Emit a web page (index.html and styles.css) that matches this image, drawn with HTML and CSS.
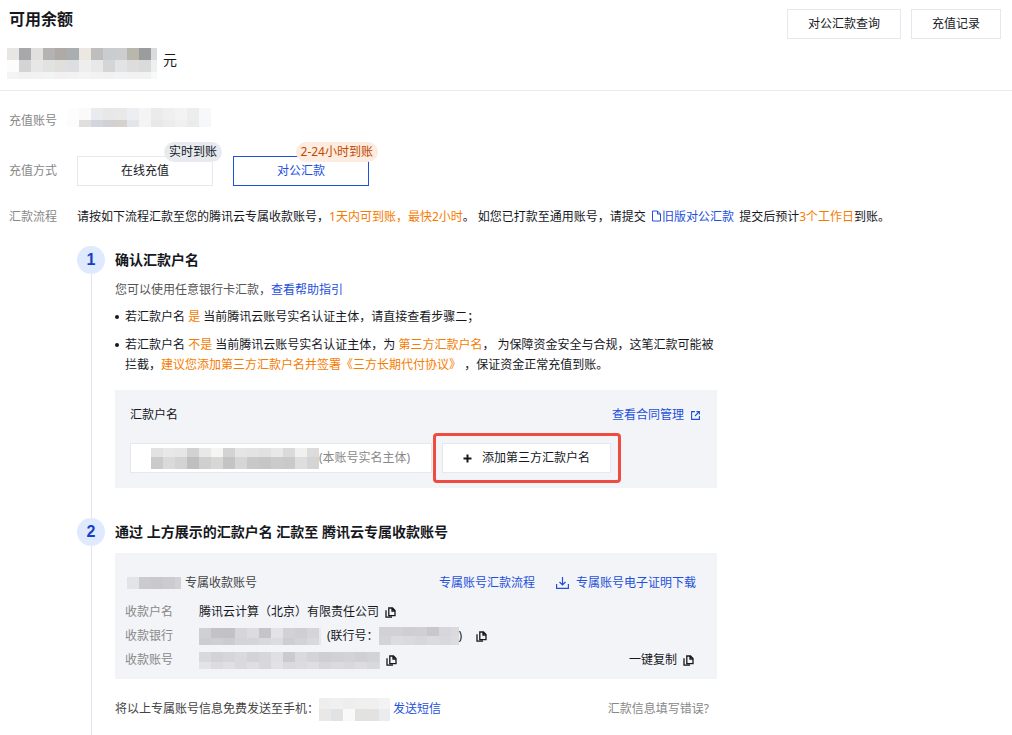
FILE: index.html
```html
<!DOCTYPE html>
<html lang="zh-CN">

<head>
  <meta charset="UTF-8">
  <meta name="viewport" content="width=device-width, initial-scale=1.0">
  <title>可用余额</title>
  <link rel="stylesheet" href="styles.css">
</head>

<body>
  <!-- 复制图标 -->
  <svg class="sprite" aria-hidden="true">
    <symbol id="icon-copy" viewBox="0 0 11 11">
      <path d="M3.8 1h3.7L10 3.5V8.6H3.8zM7 1v3h3M1 3.2V10.2h6" fill="none" stroke="currentColor" stroke-width="1.3"/>
    </symbol>
  </svg>

  <!-- 余额 -->
  <header class="header">
    <div>
      <h1 class="header-title">可用余额</h1>
      <div class="balance">
        <svg class="mosaic" width="150" height="31" data-heights="12 12 7" data-colors="e8e6e4 a8a8aa e1e0df b3b3b3 afaaa6 a9aeb0 ece7e0 bebebe c9cdd0 cccdcf b9b6ac 9b9c9e d9dbdf|fdfcfa d3d4d6 e7e7e7 e1e3e1 e1dfdd dddee1 eeeeee e8e8e8 d4d5d7 e2e3e5 dedddb d9dbdb eeeff1|f4f4f4 f1f1f1 f2f2f2 f3f3f3 f1f1f1 f2f2f2 f4f4f4 f2f2f2 f1f1f1 f3f3f3 f2f2f2 f2f2f2 f9f9f9"></svg>
        <span>元</span>
      </div>
    </div>
    <div class="header-actions">
      <button type="button" class="btn">对公汇款查询</button>
      <button type="button" class="btn">充值记录</button>
    </div>
  </header>

  <main class="form">
    <div class="form-row">
      <div class="form-label">充值账号</div>
      <div class="form-content account">
        <svg class="mosaic" width="144" height="19" data-heights="12 7" data-colors="fdfdfd fbfafa e9ebee e8e8e8 e9e9e8 eceef1 f4f4f4 ebebeb efefef f3f3f3 ededed f6f8fa|fcfcfc e1dfdd d2d5dd d1d1d3 d6d1cc e2e6e9 f4f4f4 e8e8e8 ececec f0f0f0 ebebeb f5f7fa"></svg>
      </div>
    </div>

    <div class="form-row">
      <div class="form-label">充值方式</div>
      <div class="form-content tabs">
        <button type="button" class="tab">在线充值<span class="tab-badge">实时到账</span></button>
        <button type="button" class="tab active">对公汇款<span class="tab-badge">2-24小时到账</span></button>
      </div>
    </div>

    <div class="form-row form-row-text">
      <div class="form-label">汇款流程</div>
      <div class="form-content">
        <p class="tip">请按如下流程汇款至您的腾讯云专属收款账号，<span class="warn">1天内可到账，最快2小时</span>。 如您已打款至通用账号，请提交 <a href="#" class="link doc-link"><svg class="icon-doc" width="11" height="12" viewBox="0 0 11 12"><path d="M1.5 1h5L9.500 4v7h-8zM6.500 1v3h3" fill="none" stroke="currentColor"/></svg>旧版对公汇款</a> 提交后预计<span class="warn">3个工作日</span>到账。</p>

        <!-- 步骤 -->
        <ol class="steps">
          <li class="step">
            <span class="step-num">1</span>
            <div class="step-body">
              <h2 class="step-title">确认汇款户名</h2>
              <p class="step-desc">您可以使用任意银行卡汇款，<a href="#" class="link">查看帮助指引</a></p>
              <ul class="notes">
                <li>若汇款户名 <span class="warn">是</span> 当前腾讯云账号实名认证主体，请直接查看步骤二；</li>
                <li>若汇款户名 <span class="warn">不是</span> 当前腾讯云账号实名认证主体，为 <span class="warn">第三方汇款户名</span>， 为保障资金安全与合规，这笔汇款可能被拦截，<span class="warn">建议您添加第三方汇款户名并签署《三方长期代付协议》</span> ，保证资金正常充值到账。</li>
              </ul>

              <section class="panel payer">
                <div class="panel-head">
                  <span>汇款户名</span>
                  <a href="#" class="link contract-link">查看合同管理
                    <svg width="9" height="9" viewBox="0 0 9 9"><path d="M4 .6H.6v7.800h7.800V5M5.500.6h2.900v2.900M8.300.7L4 5" fill="none" stroke="currentColor" stroke-width="1.100"/></svg>
                  </a>
                </div>
                <div class="payer-list">
                  <div class="payer-item">
                    <svg class="mosaic" width="168" height="21" data-heights="9 12" data-colors="e2e2e2 e8e8e8 e6e6e6 d2d2d2 e8e8e8 f5f5f3 d3d3d3 e5e5e5 e3e3e3 e1e1e1 e8e8e8 d9dbda f0f0f0 dcdcdc|cacaca dadada d3d3d3 bfbfbf d1cfcd d7d7d7 c4c4c4 d6d6d6 c8c8c8 c6c6c6 cbcbcb c9c9c9 dedede d4d4d4"></svg>
                    <span>(本账号实名主体)</span>
                  </div>
                  <div class="highlight">
                    <button type="button" class="btn btn-add">
                      <svg width="9" height="9" viewBox="0 0 9 9"><path d="M4.500 .5v8M.5 4.500h8" stroke="currentColor" stroke-width="2"/></svg>
                      添加第三方汇款户名
                    </button>
                  </div>
                </div>
              </section>
            </div>
          </li>

          <li class="step">
            <span class="step-num">2</span>
            <div class="step-body">
              <h2 class="step-title">通过 上方展示的汇款户名 汇款至 腾讯云专属收款账号</h2>

              <section class="panel payee">
                <div class="payee-head">
                  <svg class="mosaic" width="54" height="12" data-heights="12" data-colors="e3e4e8 cbcbce c9c9cd cccccf d2d2d5"></svg>
                  <span>专属收款账号</span>
                  <div class="payee-links">
                    <a href="#" class="link">专属账号汇款流程</a>
                    <a href="#" class="link download-link">
                      <svg width="13" height="12" viewBox="0 0 13 12"><path d="M6.500 0v8M3.500 5l3 3 3-3M.6 7v4.400h11.800V7" fill="none" stroke="currentColor" stroke-width="1.200"/></svg>
                      专属账号电子证明下载
                    </a>
                  </div>
                </div>
                <dl class="payee-info">
                  <div class="info-row">
                    <dt>收款户名</dt>
                    <dd>腾讯云计算（北京）有限责任公司
                      <button type="button" class="copy" aria-label="复制"><svg width="11" height="11"><use href="#icon-copy"/></svg></button>
                    </dd>
                  </div>
                  <div class="info-row">
                    <dt>收款银行</dt>
                    <dd>
                      <svg class="mosaic" width="122" height="17" data-heights="10 7" data-colors="d0d0d4 c3c3c7 c2c2c6 d6d6da dcdce0 c5c5c9 e3e3e7 d2d2d6 cfcfd3 d5d5d9 e9e9ed|cdcdd1 cfcfd3 ccccd0 d4d4d8 d5d5d9 d9d9dd dcdce0 cececf d3d3d7 d9d9dd e6e6ea"></svg>
                      <span class="bank-code">(联行号：<svg class="mosaic" width="80" height="18" data-heights="9 9" data-colors="d2d2d6 d2d2d5 cfcfd3 d0d0d4 c8c8cc d7d7db dadade|d4d4d7 dcdcdf dadade d7d7db dbdbdf d9d9dd dcdce0"></svg>)</span>
                      <button type="button" class="copy copy-far" aria-label="复制"><svg width="11" height="11"><use href="#icon-copy"/></svg></button>
                    </dd>
                  </div>
                  <div class="info-row">
                    <dt>收款账号</dt>
                    <dd>
                      <svg class="mosaic" width="181" height="17" data-heights="10 7" data-colors="d9d9dd d3d3d7 d6d6da dadade d3d3d7 d7d7db e0e0e4 cbcbcf dadade d4d4d8 cfcfd3 d1d1d5 d3d3d7 d0d0d4 d3d3d7 d8d8dc|e4e4e8 dcdce0 e0e0e4 dadade dfdfe3 d8d8dc e2e2e6 dadade dcdce0 dfdfe3 d7d7db dbdbdf d9d9dd dddde1 d9d9dd dddde1"></svg>
                      <button type="button" class="copy" aria-label="复制"><svg width="11" height="11"><use href="#icon-copy"/></svg></button>
                      <button type="button" class="copy copy-all">一键复制 <svg width="11" height="11"><use href="#icon-copy"/></svg></button>
                    </dd>
                  </div>
                </dl>
              </section>

              <div class="sms">
                <span>将以上专属账号信息免费发送至手机：</span>
                <svg class="mosaic" width="71" height="23" data-heights="11 12" data-colors="eeeeee f0f0f0 eeeeee efefef f0f0f0 f3f3f3|e9e8e6 e1e2e4 f9f9f9 e2e2e0 e3e2e0 ebeced"></svg>
                <a href="#" class="link sms-send">发送短信</a>
                <a href="#" class="sms-help">汇款信息填写错误?</a>
              </div>
            </div>
          </li>
        </ol>
      </div>
    </div>
  </main>

  <script src="mosaic.js"></script>
</body>

</html>
```

FILE: styles.css
```css
/* 整体样式 */
* {
  box-sizing: border-box;
}

body {
  margin: 0;
  background-color: #fff;
  color: #16181d;
  font-family: "Noto Sans", "Noto Sans CJK SC", sans-serif;
  font-size: 12px;
  line-height: 20px;
}

h1,
h2,
p,
ul,
ol,
dl,
dd {
  margin: 0;
  padding: 0;
}

ol,
ul {
  list-style: none;
}

button {
  font: inherit;
  color: inherit;
  cursor: pointer;
}

svg {
  flex: none;
}

.sprite {
  position: absolute;
  width: 0;
  height: 0;
}

.link {
  color: #1e50dc;
  text-decoration: none;
}

.link:hover {
  text-decoration: underline;
}

.warn {
  color: #f57c00;
}

.btn {
  height: 30px;
  padding: 0 20px;
  border: 1px solid #e6e8f0;
  background-color: #fff;
  line-height: 28px;
}

/* 头部 */
.header {
  display: flex;
  justify-content: space-between;
  padding: 9px 11px 11px 7px;
  border-bottom: 1px solid #ebebeb;
}

.header-title {
  padding-left: 2px;
  font-size: 16px;
  line-height: 20px;
}

.header-actions {
  display: flex;
  align-items: flex-start;
  gap: 10px;
}

.balance {
  display: flex;
  gap: 6px;
  margin-top: 19px;
  font-size: 14px;
  line-height: 24px;
}

/* 表单 */
.form {
  display: flex;
  flex-direction: column;
  gap: 20px;
  padding: 15px 11px 0 9px;
}

.form-row {
  display: flex;
  align-items: center;
  min-height: 30px;
}

.form-row-text {
  align-items: flex-start;
  padding-top: 1px;
}

.form-label {
  flex: none;
  width: 68px;
  color: #888;
}

.form-content {
  flex: 1;
  min-width: 0;
}

.account {
  display: flex;
  margin: 0 0 8px -10px;
}

/* 充值方式 */
.tabs {
  display: flex;
  gap: 20px;
}

.tab {
  position: relative;
  width: 136px;
  height: 30px;
  padding: 0;
  border: 1px solid #e6e8f0;
  background-color: #fff;
  line-height: 28px;
}

.tab-badge {
  position: absolute;
  top: -15px;
  right: -10px;
  padding: 0 5px;
  border-radius: 10px;
  background-color: #e7ebf0;
  line-height: 20px;
  white-space: nowrap;
}

.tab.active {
  border-color: #1e50dc;
  color: #1e50dc;
}

.tab.active .tab-badge {
  background-color: #fdecdf;
  color: #be4a00;
}

.doc-link {
  margin-right: 2px;
}

.icon-doc {
  margin-left: 2px;
  vertical-align: -1px;
}

/* 步骤 */
.steps {
  margin-top: 19px;
}

.step {
  position: relative;
  display: flex;
  gap: 10px;
  max-width: 640px;
  padding-bottom: 30px;
}

.step:last-child {
  padding-bottom: 16px;
}

.step::before {
  content: "";
  position: absolute;
  top: 28px;
  bottom: 0;
  left: 14px;
  width: 1px;
  background-color: #e4e5ee;
}

.step-num {
  flex: none;
  width: 28px;
  height: 28px;
  border-radius: 50%;
  background-color: #e0eaff;
  color: #1541c4;
  font-family: "Liberation Sans", Arial, sans-serif;
  font-size: 16px;
  font-weight: bold;
  line-height: 28px;
  text-align: center;
}

.step-body {
  flex: 1;
  min-width: 0;
}

.step-title {
  font-size: 14px;
  line-height: 28px;
}

.step-desc {
  margin-top: 6px;
  color: #555;
}

.notes {
  display: flex;
  flex-direction: column;
  gap: 8px;
  margin-top: 7px;
}

.notes li {
  position: relative;
  padding-left: 10px;
}

.notes li::before {
  content: "";
  position: absolute;
  top: 8px;
  left: 0;
  width: 4px;
  height: 4px;
  border-radius: 50%;
  background-color: #16181d;
}

.panel {
  background-color: #f3f4f8;
}

/* 汇款户名 */
.payer {
  margin-top: 15px;
  padding: 15px;
}

.panel-head {
  display: flex;
  justify-content: space-between;
}

.contract-link {
  display: flex;
  align-items: center;
  gap: 7px;
  margin-right: 2px;
}

.payer-list {
  display: flex;
  gap: 10px;
  margin-top: 18px;
}

.payer-item {
  display: flex;
  align-items: center;
  width: 302px;
  height: 30px;
  padding: 0 20px;
  border: 1px solid #e6e8f0;
  background-color: #fff;
  color: #888;
}

.highlight {
  position: relative;
}

.highlight::after {
  content: "";
  position: absolute;
  inset: -10px -10px -10px -9px;
  border: 3px solid #f04b40;
  border-radius: 4px;
  pointer-events: none;
}

.btn-add {
  display: flex;
  align-items: center;
  gap: 10px;
}

/* 收款账号 */
.payee {
  margin-top: 7px;
  padding: 17px 21px 7px 10px;
}

.payee-head {
  display: flex;
  align-items: center;
  gap: 4px;
  height: 26px;
  padding-left: 2px;
  color: #444;
}

.payee-links {
  display: flex;
  gap: 21px;
  margin-left: auto;
}

.download-link {
  display: flex;
  align-items: center;
  gap: 7px;
}

.payee-info {
  margin-top: 4px;
}

.info-row {
  display: flex;
  line-height: 24px;
}

.info-row dt {
  flex: none;
  width: 74px;
  color: #888;
}

.info-row dd {
  display: flex;
  flex: 1;
  align-items: center;
  gap: 6px;
}

.bank-code {
  display: flex;
  align-items: center;
}

.copy {
  display: flex;
  align-items: center;
  gap: 6px;
  padding: 0;
  border: 0;
  background: none;
}

.copy-far {
  margin-left: 8px;
}

.copy-all {
  margin-right: 2px;
  margin-left: auto;
}

/* 短信 */
.sms {
  display: flex;
  align-items: center;
  height: 20px;
  margin-top: 20px;
  color: #444;
}

.sms-send {
  margin-left: 3px;
}

.sms-help {
  margin-right: 8px;
  margin-left: auto;
  color: #888;
  text-decoration: none;
}
```

FILE: mosaic.js
```js
// 敏感信息打码，每格宽12px
document.querySelectorAll('.mosaic').forEach((svg) => {
  const heights = svg.dataset.heights.split(' ').map(Number);
  let y = 0;
  svg.dataset.colors.split('|').forEach((row, i) => {
    row.split(' ').forEach((color, j) => {
      const rect = document.createElementNS('http://www.w3.org/2000/svg', 'rect');
      rect.setAttribute('x', j * 12);
      rect.setAttribute('y', y);
      rect.setAttribute('width', 12);
      rect.setAttribute('height', heights[i]);
      rect.setAttribute('fill', '#' + color);
      svg.appendChild(rect);
    });
    y += heights[i];
  });
});
```
